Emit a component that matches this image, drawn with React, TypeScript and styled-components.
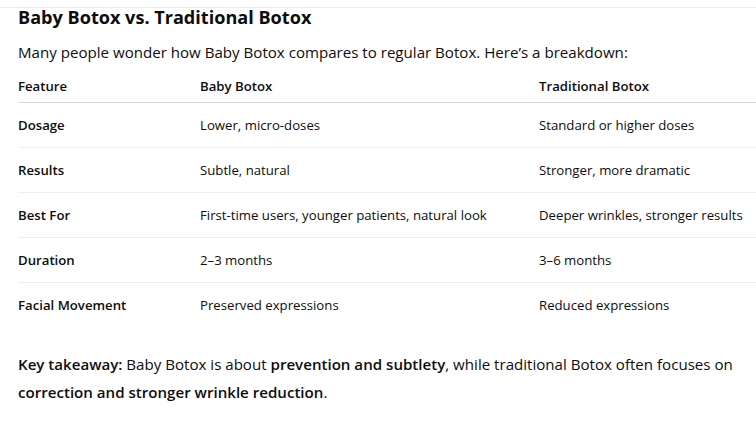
import React from "react";
import styled, { createGlobalStyle } from "styled-components";

const GlobalStyle = createGlobalStyle`
  html, body {
    margin: 0;
    padding: 0;
    background: #ffffff;
    overflow: hidden;
  }
  body {
    font-family: "Open Sans", "Noto Sans", "Liberation Sans", sans-serif;
    color: #0d0d0d;
  }
`;

const Page = styled.div`
  width: 756px;
  height: 423px;
  border-top: 1px solid #ececec;
  margin-top: 7px;
  box-sizing: border-box;
  padding-left: 18px;
`;

const Heading = styled.h3`
  margin: 0;
  font-size: 18.1px;
  line-height: 18px;
  font-weight: 700;
`;

const Intro = styled.p`
  margin: 12px 0 0;
  font-size: 15.1px;
  line-height: 28px;
`;

const Table = styled.div`
  display: grid;
  grid-template-columns: 182px 339px 1fr;
  margin-top: 2px;
  font-size: 13.2px;
  line-height: 20px;
`;

const HeadCell = styled.div`
  font-weight: 600;
  padding: 8px 0 6px;
  border-bottom: 1px solid #d9d9d9;
`;

const Cell = styled.div<{ $bold?: boolean; $last?: boolean }>`
  font-weight: ${(p) => (p.$bold ? 600 : 400)};
  padding: 12px 0;
  border-bottom: 1px solid ${(p) => (p.$last ? "transparent" : "#efefef")};
  white-space: nowrap;
`;

const Takeaway = styled.p`
  margin: 22px 0 0;
  font-size: 15.1px;
  line-height: 28px;
  padding-right: 10px;
`;

const Strong = styled.strong`
  font-weight: 600;
`;

const rows: [string, string, string][] = [
  ["Dosage", "Lower, micro-doses", "Standard or higher doses"],
  ["Results", "Subtle, natural", "Stronger, more dramatic"],
  ["Best For", "First-time users, younger patients, natural look", "Deeper wrinkles, stronger results"],
  ["Duration", "2–3 months", "3–6 months"],
  ["Facial Movement", "Preserved expressions", "Reduced expressions"],
];

export default function App() {
  return (
    <>
      <GlobalStyle />
      <Page>
        <Heading>Baby Botox vs. Traditional Botox</Heading>
        <Intro>Many people wonder how Baby Botox compares to regular Botox. Here’s a breakdown:</Intro>
        <Table>
          <HeadCell>Feature</HeadCell>
          <HeadCell>Baby Botox</HeadCell>
          <HeadCell>Traditional Botox</HeadCell>
          {rows.map((r, i) => {
            const last = i === rows.length - 1;
            return (
              <React.Fragment key={r[0]}>
                <Cell $bold $last={last}>{r[0]}</Cell>
                <Cell $last={last}>{r[1]}</Cell>
                <Cell $last={last}>{r[2]}</Cell>
              </React.Fragment>
            );
          })}
        </Table>
        <Takeaway>
          <Strong>Key takeaway:</Strong> Baby Botox is about <Strong>prevention and subtlety</Strong>, while traditional Botox often focuses on{" "}
          <Strong>correction and stronger wrinkle reduction</Strong>.
        </Takeaway>
      </Page>
    </>
  );
}
